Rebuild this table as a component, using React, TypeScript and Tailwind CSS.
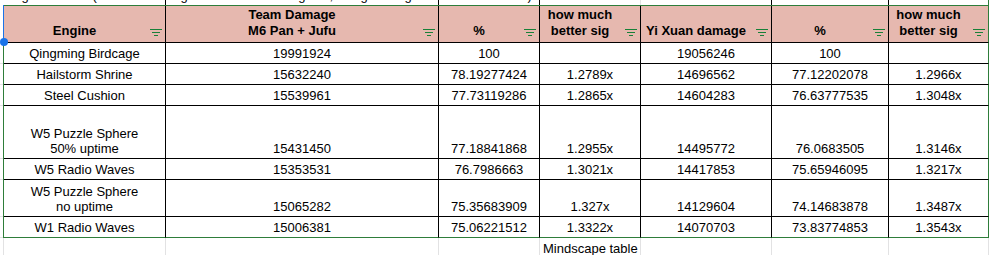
import React from "react";

const GREEN = "border-[#2e7d3a]";

function FilterIcon() {
  return (
    <svg
      width="12"
      height="7"
      viewBox="0 0 12 7"
      className="absolute right-[3px] bottom-[6px]"
    >
      <path d="M0 0.5h12M2 3.5h8M4 6.5h4" stroke="#188038" strokeWidth="1" />
    </svg>
  );
}

const headers: React.ReactNode[] = [
  "Engine",
  <>
    Team Damage
    <br />
    M6 Pan + Jufu
  </>,
  "%",
  <>
    how much
    <br />
    better sig
  </>,
  "Yi Xuan damage",
  "%",
  <>
    how much
    <br />
    better sig
  </>,
];

const rows: React.ReactNode[][] = [
  ["Qingming Birdcage", "19991924", "100", "", "19056246", "100", ""],
  ["Hailstorm Shrine", "15632240", "78.19277424", "1.2789x", "14696562", "77.12202078", "1.2966x"],
  ["Steel Cushion", "15539961", "77.73119286", "1.2865x", "14604283", "76.63777535", "1.3048x"],
  [
    <>
      W5 Puzzle Sphere
      <br />
      50% uptime
    </>,
    "15431450",
    "77.18841868",
    "1.2955x",
    "14495772",
    "76.0683505",
    "1.3146x",
  ],
  ["W5 Radio Waves", "15353531", "76.7986663", "1.3021x", "14417853", "75.65946095", "1.3217x"],
  [
    <>
      W5 Puzzle Sphere
      <br />
      no uptime
    </>,
    "15065282",
    "75.35683909",
    "1.327x",
    "14129604",
    "74.14683878",
    "1.3487x",
  ],
  ["W1 Radio Waves", "15006381", "75.06221512", "1.3322x", "14070703", "73.83774853", "1.3543x"],
];

const rowHeights = ["h-[37px]", "h-[21px]", "h-[21px]", "h-[21px]", "h-[53px]", "h-[21px]", "h-[37px]", "h-[21px]"];

export default function App() {
  const gridCols = "grid grid-cols-[162px_273px_101px_101px_131px_117px_100px]";
  return (
    <div className="w-[993px] h-[255px] overflow-hidden bg-white text-[13px] text-black font-['Liberation_Sans',Arial,sans-serif]">
      {/* strip of the row above */}
      <div className="flex h-[5px] overflow-hidden">
        <div className="w-[4px] shrink-0" />
        <div className={gridCols}>
          <div className="border-r border-black whitespace-nowrap leading-[15px] -mt-[12px] pl-[6px]">
            Signal at total (from the damage numbers of all engines, using the Sig bonus rate for each)
          </div>
          <div className="border-r border-black" />
          <div className="border-r border-black" />
          <div className="border-r border-[#e2e2e3]" />
          <div className="border-r border-black" />
          <div className="border-r border-black" />
          <div className={`border-r ${GREEN}`} />
        </div>
      </div>

      {/* main table */}
      <div className="flex">
        <div className="w-[3px] shrink-0 flex flex-col pt-[1px]">
          {rowHeights.map((h, i) => (
            <div key={i} className={`${h} border-b border-[#e2e2e3]`} />
          ))}
        </div>
        <div className={`relative border-l border-t ${GREEN}`}>
          <div className="absolute -left-[1px] -top-[1px] w-[1px] h-[37px] bg-[#1a73e8]" />
          <div className="absolute z-10 -left-[4px] top-[32px] w-[8px] h-[8px] rounded-full bg-[#1a73e8]" />
          <div className={`${gridCols} grid-rows-[37px_21px_21px_21px_53px_21px_37px_21px]`}>
            {headers.map((h, i) => (
              <div
                key={`h${i}`}
                className={`relative flex items-end justify-center text-center bg-[#e6b8af] font-bold leading-[16px] pr-[20px] pb-[3px] border-b border-r ${
                  i === 6 ? GREEN : "border-black"
                } border-b-black`}
              >
                <div>{h}</div>
                <FilterIcon />
              </div>
            ))}
            {rows.map((r, ri) =>
              r.map((c, ci) => {
                const last = ri === rows.length - 1;
                const rightCls = ci === 6 ? "border-r-[#2e7d3a]" : "border-r-black";
                const botCls = last ? "border-b-[#2e7d3a]" : "border-b-black";
                return (
                  <div
                    key={`${ri}-${ci}`}
                    className={`flex items-end justify-center text-center leading-[15px] pb-[2px] border-r border-b ${rightCls} ${botCls}`}
                  >
                    <div>{c}</div>
                  </div>
                );
              })
            )}
          </div>
        </div>
      </div>

      {/* row below */}
      <div className="flex h-[21px]">
        <div className="w-[4px] shrink-0 border-r border-[#e2e2e3]" />
        <div className={gridCols}>
          <div className="border-r border-[#e2e2e3]" />
          <div className="border-r border-[#e2e2e3]" />
          <div className="border-r border-[#e2e2e3]" />
          <div className="border-r border-[#e2e2e3] whitespace-nowrap leading-[15px] pt-[3px] pl-[3px]">
            Mindscape table
          </div>
          <div className="border-r border-[#e2e2e3]" />
          <div className="border-r border-[#e2e2e3]" />
          <div className="border-r border-[#e2e2e3]" />
        </div>
      </div>
    </div>
  );
}
